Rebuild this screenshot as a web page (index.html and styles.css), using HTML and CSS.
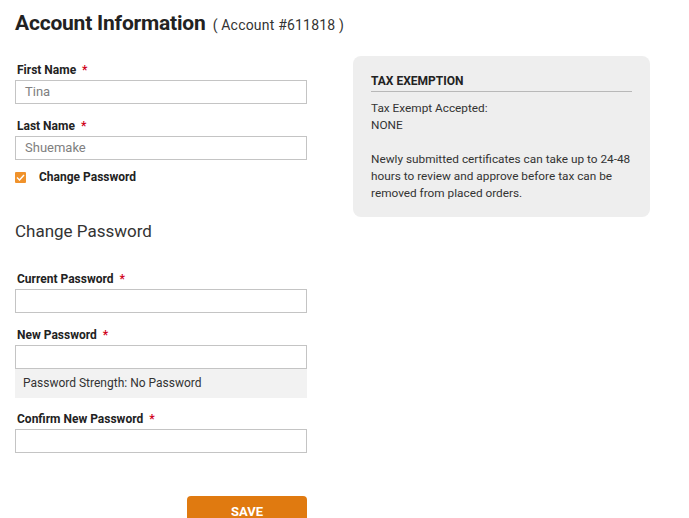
FILE: index.html
```html
<!DOCTYPE html>
<html>
<head>
<meta charset="utf-8">
<link rel="stylesheet" href="styles.css">
</head>
<body>
<div class="page">
  <h1 class="title">Account Information <span class="acct">( Account #611818 )</span></h1>
  <div class="cols">
    <div class="form">
      <div class="field">
        <label class="lbl">First Name <span class="req">*</span></label>
        <div class="input">Tina</div>
      </div>
      <div class="field">
        <label class="lbl">Last Name <span class="req">*</span></label>
        <div class="input">Shuemake</div>
      </div>
      <div class="check">
        <span class="box"><svg width="9" height="7" viewBox="0 0 9 7"><path d="M1 3.5 L3.5 6 L8 1" fill="none" stroke="#fff" stroke-width="1.4"/></svg></span>
        <span class="check-lbl">Change Password</span>
      </div>
      <h2 class="sub">Change Password</h2>
      <div class="field">
        <label class="lbl">Current Password <span class="req">*</span></label>
        <div class="input"></div>
      </div>
      <div class="field field-tight">
        <label class="lbl">New Password <span class="req">*</span></label>
        <div class="input"></div>
        <div class="strength">Password Strength: No Password</div>
      </div>
      <div class="field">
        <label class="lbl">Confirm New Password <span class="req">*</span></label>
        <div class="input"></div>
      </div>
      <div class="actions"><button class="save">SAVE</button></div>
    </div>
    <div class="panel">
      <div class="panel-title">TAX EXEMPTION</div>
      <p class="ptext">Tax Exempt Accepted:<br>NONE</p>
      <p class="ptext">Newly submitted certificates can take up to 24-48 hours to review and approve before tax can be removed from placed orders.</p>
    </div>
  </div>
</div>
</body>
</html>
```
FILE: styles.css
```css
* { box-sizing: border-box; }
html, body { margin: 0; padding: 0; background: #fff; }
body { font-family: Roboto, "Liberation Sans", sans-serif; color: #333; }
.page { padding: 9px 15px 0 15px; }
.title { margin: 0; font-size: 21px; font-weight: 700; color: #222; letter-spacing: -0.2px; line-height: 28px; }
.acct { font-size: 14px; font-weight: 400; color: #333; margin-left: 2px; letter-spacing: 0.2px; }
.cols { display: flex; gap: 46px; margin-top: 17px; }
.form { width: 292px; padding-top: 6px; }
.field { margin-bottom: 14px; }
.field-tight { margin-bottom: 13px; }
.lbl { display: block; font-size: 12px; font-weight: 700; color: #222; padding-left: 2px; line-height: 16px; margin-bottom: 2px; }
.req { color: #d0021b; margin-left: 3px; }
.input { height: 24px; border: 1px solid #c4c4c4; background: #fff; font-size: 13px; color: #808080; padding: 0 9px; line-height: 22px; }
.check { display: flex; align-items: center; margin-top: -5px; height: 16px; }
.box { width: 11px; height: 11px; background: #f0922b; display: flex; align-items: center; justify-content: center; border-radius: 1px; }
.check-lbl { font-size: 12px; font-weight: 700; color: #222; margin-left: 13px; }
.sub { font-size: 17px; font-weight: 400; color: #333; margin: 35px 0 29px; line-height: 22px; }
.strength { background: #f2f2f2; height: 29px; font-size: 12px; color: #333; padding: 0 8px; line-height: 29px; }
.actions { display: flex; justify-content: flex-end; margin-top: 43px; }
.save { width: 120px; height: 34px; background: #e07a10; color: #fff; border: none; border-radius: 4px 4px 0 0; font-family: inherit; font-size: 13px; font-weight: 700; padding: 0 0 4px; }
.panel { width: 297px; background: #eeeeee; border-radius: 8px; padding: 18px 18px 15px 18px; align-self: flex-start; }
.panel-title { font-size: 12px; font-weight: 700; color: #222; border-bottom: 1px solid #b8b8b8; padding-bottom: 3px; margin-bottom: 8px; }
.ptext { font-size: 11.8px; line-height: 17px; color: #333; margin: 0 0 17px; }
.ptext:last-child { margin-bottom: 0; }
```
